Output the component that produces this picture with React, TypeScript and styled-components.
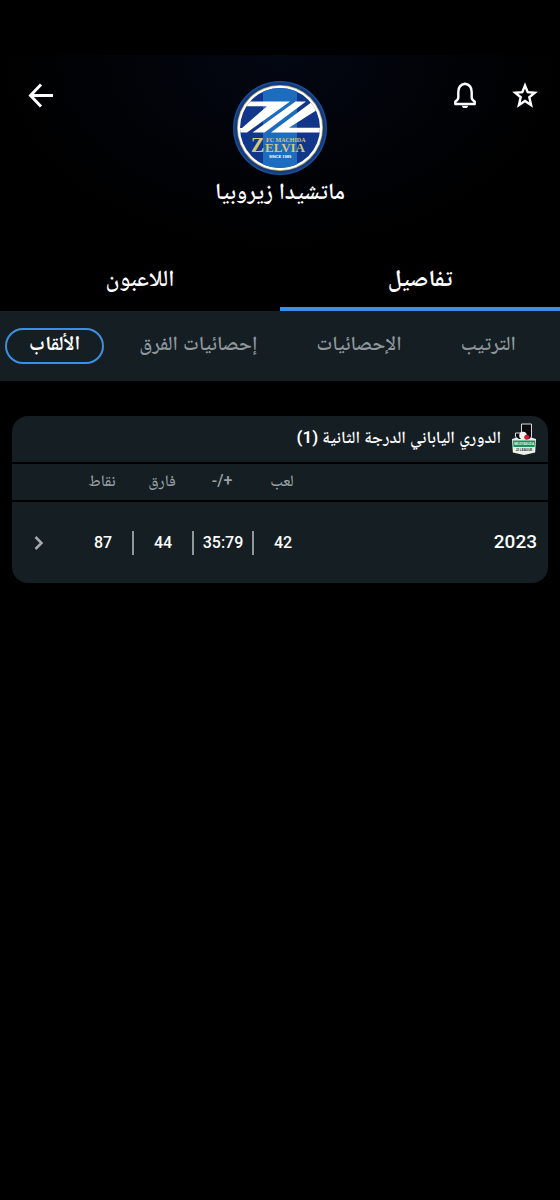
import React, { useState } from "react";
import styled, { createGlobalStyle } from "styled-components";

const GlobalStyle = createGlobalStyle`
  *, *::before, *::after { box-sizing: border-box; }
  html { background: #000; }
  body { margin: 0; background: #000; }
  #root { min-height: 100vh; }
  button {
    margin: 0;
    padding: 0;
    border: 0;
    background: none;
    color: inherit;
    font: inherit;
    cursor: pointer;
  }
`;

const Page = styled.main`
  min-height: 100vh;
  padding-top: 55px;
  color: #fff;
  font-family: Roboto, "Noto Naskh Arabic", "DejaVu Sans", sans-serif;
`;

const Header = styled.header`
  display: grid;
  grid-template-columns: 1fr auto 1fr;
  height: 195px;
  padding: 24px 19px 0;
  background: radial-gradient(ellipse 50% 100% at 50% 0, #030712, #000);
`;

const Actions = styled.div<{ $end?: boolean }>`
  display: flex;
  gap: 28px;
  align-items: flex-start;
  justify-content: ${(p) => (p.$end ? "flex-end" : "flex-start")};
`;

const IconButton = styled.button`
  display: flex;
  svg { display: block; }
`;

const Team = styled.div`
  display: flex;
  flex-direction: column;
  align-items: center;
  padding-top: 1px;
`;

const TeamName = styled.h1`
  margin: 0;
  font-size: 23px;
  line-height: 32px;
  font-weight: 600;
`;

const Tabs = styled.nav`
  display: grid;
  grid-template-columns: 1fr 1fr;
`;

const Tab = styled.button<{ $active: boolean }>`
  height: 61px;
  border-bottom: 4px solid ${(p) => (p.$active ? "#3b8fe6" : "transparent")};
  font-size: 23px;
  line-height: 32px;
  font-weight: ${(p) => (p.$active ? 700 : 600)};
`;

const SubTabs = styled.nav`
  display: flex;
  align-items: center;
  justify-content: space-between;
  height: 70px;
  padding: 0 20px 0 5px;
  background: #151e23;
`;

const Pill = styled.button<{ $active: boolean }>`
  height: 36px;
  padding: 0 22px 6px;
  border: 2px solid ${(p) => (p.$active ? "#3b8fe6" : "transparent")};
  border-radius: 18px;
  color: ${(p) => (p.$active ? "#fff" : "#8f979c")};
  font-size: 20px;
  line-height: 26px;
  font-weight: ${(p) => (p.$active ? 700 : 600)};
  white-space: nowrap;
`;

const Card = styled.section`
  margin: 35px 12px 0;
  border-radius: 16px;
  background: #151e23;
  overflow: hidden;
`;

const CardTitle = styled.h2`
  display: flex;
  align-items: center;
  gap: 10px;
  height: 46px;
  margin: 0;
  padding: 0 11px;
  font-size: 17px;
  line-height: 28px;
  font-weight: 600;

  span { padding-bottom: 4px; }
`;

const Table = styled.table`
  width: 100%;
  table-layout: fixed;
  border-collapse: collapse;
`;

const HeadCell = styled.th<{ $wide?: boolean }>`
  width: ${(p) => (p.$wide ? "auto" : "60px")};
  height: 38px;
  padding: 0 0 2px;
  border-top: 2px solid #000;
  border-bottom: 2px solid #000;
  color: #9aa1a5;
  font-size: 16px;
  line-height: 20px;
  font-weight: 500;
`;

const SeasonCell = styled.th`
  height: 82px;
  padding: 0 11px 2px;
  text-align: start;
  font-size: 19px;
  font-weight: 500;
`;

const Cell = styled.td`
  padding: 0;
  text-align: center;
  font-size: 16px;
  font-weight: 500;
`;

const Value = styled.span<{ $divided: boolean }>`
  display: block;
  line-height: 24px;
  border-left: 2px solid ${(p) => (p.$divided ? "#8f979c" : "transparent")};
`;

const RowLink = styled.button`
  display: flex;
  align-items: center;
  justify-content: center;
  width: 54px;
  height: 40px;
  margin-right: auto;
  margin-left: 0;
  color: #a4aaae;
`;

const BackIcon = () => (
  <svg width="42" height="32" viewBox="0 0 42 32" fill="none" stroke="#fff" strokeWidth="3" aria-hidden="true">
    <path d="M34 16.500H12M22 5.500 L11.500 16.500 L22 27.500" />
  </svg>
);

const BellIcon = () => (
  <svg width="32" height="32" viewBox="0 0 32 32" fill="none" aria-hidden="true">
    <path
      d="M16 4.800C11.800 5.500 9.300 8.700 9.300 13v5.500c0 1.700-.9 2.800-3 4v2.500h19.400v-2.500c-2.100-1.200-3-2.300-3-4V13c0-4.300-2.500-7.500-6.700-8.200Z"
      stroke="#fff"
      strokeWidth="2.400"
      strokeLinejoin="round"
    />
    <path d="M13 26.800h6a3 2.300 0 0 1-6 0Z" fill="#fff" />
  </svg>
);

const StarIcon = () => (
  <svg width="32" height="32" viewBox="0 0 32 32" fill="none" aria-hidden="true">
    <path
      d="m16 6.500 2.700 6.700 7.100.5-5.500 4.600 1.800 7.800L16 22l-6.100 4.100 1.800-7.800-5.500-4.600 7.100-.5Z"
      stroke="#fff"
      strokeWidth="2.400"
    />
  </svg>
);

const ChevronIcon = () => (
  <svg width="12" height="16" viewBox="0 0 12 16" fill="none" stroke="currentColor" strokeWidth="2.500" aria-hidden="true">
    <path d="m2.500 2 6 6-6 6" />
  </svg>
);

const Crest = () => (
  <svg width="96" height="96" viewBox="0 0 96 96" role="img" aria-label="FC Machida Zelvia" direction="ltr">
    <defs>
      <clipPath id="field">
        <circle cx="48" cy="48" r="40" />
      </clipPath>
    </defs>
    <circle cx="48" cy="48" r="47" fill="#1c4f96" />
    <circle cx="48" cy="48" r="45.500" fill="#123a82" />
    <circle cx="48" cy="48" r="43" fill="#b9ad62" />
    <circle cx="48" cy="48" r="42.200" fill="#fff" />
    <g clipPath="url(#field)">
      <rect width="96" height="96" fill="#12378a" />
      <rect x="31" width="34" height="96" fill="#1c6cc0" />
      <g fill="#fff">
        <path d="M16 21.500H58L15 52.500H5V48h5L35 26.300H12Z" />
        <path d="M63.500 21.500H74L32.500 52.500H20.500Z" />
        <path d="M80.500 21.500h10v5L57 47.800h35v4.700H39Z" />
      </g>
      <g fill="#d2c67c" fontFamily="Liberation Serif, serif" fontWeight="700">
        <text x="19" y="72" fontSize="20">Z</text>
        <text x="33" y="72" fontSize="13">ELVIA</text>
        <text x="34" y="62" fontSize="6">FC MACHIDA</text>
      </g>
      <text x="48" y="77.500" fill="#fff" fontFamily="Liberation Sans, sans-serif" fontSize="4" fontWeight="700" textAnchor="middle">
        SINCE 1989
      </text>
    </g>
  </svg>
);

const LeagueLogo = () => (
  <svg width="26" height="32" viewBox="0 0 26 32" aria-hidden="true" direction="ltr">
    <path d="M10.500 1h10v12a6.500 6.500 0 0 1-6.500 6h-3a6.500 6.500 0 0 1-6.500-6v-3h6Z" fill="#0b0b0b" stroke="#d8dadb" strokeWidth="1" />
    <path d="M1 16 6 14.500l2 1.500h10l2-1.500 5 1.500-.8 13.500L13 32 1.800 29.500Z" fill="#e9efeb" />
    <path d="M2 17.500h22l-.4 6.500H2.400Z" fill="#15935a" />
    <circle cx="12" cy="12.500" r="3.800" fill="#f2f2f2" />
    <circle cx="15.800" cy="14.300" r="2.500" fill="#d5162b" />
    <text x="13" y="22.300" fill="#e9f6ef" fontFamily="Liberation Sans, sans-serif" fontSize="3" fontWeight="700" textAnchor="middle">MEIJIYASUDA</text>
    <text x="13" y="28.300" fill="#26332c" fontFamily="Liberation Sans, sans-serif" fontSize="3" fontWeight="700" textAnchor="middle">J2 LEAGUE</text>
  </svg>
);

const tabs = ["تفاصيل", "اللاعبون"];
const subTabs = ["الترتيب", "الإحصائيات", "إحصائيات الفرق", "الألقاب"];
const columns = ["لعب", "+/-", "فارق", "نقاط"];
const seasons = [{ year: "2023", values: ["42", "35:79", "44", "87"] }];

export default function App() {
  const [tab, setTab] = useState(0);
  const [subTab, setSubTab] = useState(3);

  return (
    <Page dir="rtl" lang="ar">
      <GlobalStyle />
      <Header>
        <Actions>
          <IconButton aria-label="المفضلة"><StarIcon /></IconButton>
          <IconButton aria-label="الإشعارات"><BellIcon /></IconButton>
        </Actions>
        <Team>
          <Crest />
          <TeamName>ماتشيدا زيروبيا</TeamName>
        </Team>
        <Actions $end>
          <IconButton aria-label="رجوع"><BackIcon /></IconButton>
        </Actions>
      </Header>

      <Tabs>
        {tabs.map((label, i) => (
          <Tab key={label} $active={i === tab} onClick={() => setTab(i)}>{label}</Tab>
        ))}
      </Tabs>

      <SubTabs>
        {subTabs.map((label, i) => (
          <Pill key={label} $active={i === subTab} onClick={() => setSubTab(i)}>{label}</Pill>
        ))}
      </SubTabs>

      <Card>
        <CardTitle>
          <LeagueLogo />
          <span>الدوري الياباني الدرجة الثانية (1)</span>
        </CardTitle>
        <Table>
          <thead>
            <tr>
              <HeadCell $wide scope="col" aria-label="الموسم" />
              {columns.map((label) => (
                <HeadCell key={label} scope="col">{label}</HeadCell>
              ))}
              <HeadCell scope="col" aria-label="المزيد" />
            </tr>
          </thead>
          <tbody>
            {seasons.map((season) => (
              <tr key={season.year}>
                <SeasonCell scope="row">{season.year}</SeasonCell>
                {season.values.map((value, i) => (
                  <Cell key={columns[i]}>
                    <Value $divided={i < season.values.length - 1}>{value}</Value>
                  </Cell>
                ))}
                <Cell>
                  <RowLink aria-label="عرض الموسم"><ChevronIcon /></RowLink>
                </Cell>
              </tr>
            ))}
          </tbody>
        </Table>
      </Card>
    </Page>
  );
}
